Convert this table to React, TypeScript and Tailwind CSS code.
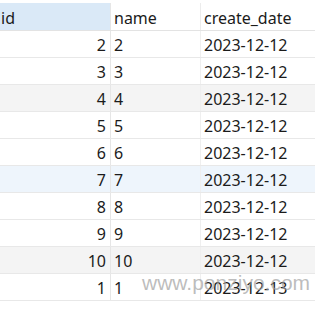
const rows: { id: string; name: string; date: string; bg: string }[] = [
  { id: "2", name: "2", date: "2023-12-12", bg: "bg-white" },
  { id: "3", name: "3", date: "2023-12-12", bg: "bg-white" },
  { id: "4", name: "4", date: "2023-12-12", bg: "bg-[#f4f4f4]" },
  { id: "5", name: "5", date: "2023-12-12", bg: "bg-white" },
  { id: "6", name: "6", date: "2023-12-12", bg: "bg-white" },
  { id: "7", name: "7", date: "2023-12-12", bg: "bg-[#eef5fc]" },
  { id: "8", name: "8", date: "2023-12-12", bg: "bg-white" },
  { id: "9", name: "9", date: "2023-12-12", bg: "bg-white" },
  { id: "10", name: "10", date: "2023-12-12", bg: "bg-[#f4f4f4]" },
  { id: "1", name: "1", date: "2023-12-13", bg: "bg-white" },
];

export default function App() {
  return (
    <div
      className="relative h-[309px] w-[315px] overflow-hidden bg-white pt-[3px] text-[16px] text-[#1b1b1b]"
      style={{ fontFamily: '"Noto Sans", "Liberation Sans", sans-serif' }}
    >
      {/* header */}
      <div className="grid h-[28px] grid-cols-[111px_90px_1fr] border-b border-[#e3e3e3]">
        <div className="flex items-center border-r border-[#e6e6e6] bg-[#dae9f7] pl-[1px] pt-[2px] leading-none">
          id
        </div>
        <div className="flex items-center border-r border-[#ececec] pl-[3px] pt-[2px] leading-none">
          name
        </div>
        <div className="flex items-center pl-[3px] pt-[2px] leading-none">create_date</div>
      </div>

      {rows.map((r) => (
        <div
          key={r.id}
          className={`grid h-[27px] grid-cols-[111px_90px_1fr] border-b border-[#e8e8e8] ${r.bg}`}
        >
          <div className="flex items-center justify-end border-r border-[#e6e6e6] pr-[4px] pt-[2px] leading-none">
            {r.id}
          </div>
          <div className="flex items-center border-r border-[#efefef] pl-[3px] pt-[2px] leading-none">
            {r.name}
          </div>
          <div className="flex items-center pl-[3px] pt-[2px] leading-none">{r.date}</div>
        </div>
      ))}

      {/* watermark */}
      <div
        className="pointer-events-none absolute left-[142px] top-[272px] text-[21px] leading-none text-[#a0a0a0]/70"
        style={{ fontFamily: '"Liberation Sans", sans-serif' }}
      >
        www.ponziyo.com
      </div>
    </div>
  );
}
